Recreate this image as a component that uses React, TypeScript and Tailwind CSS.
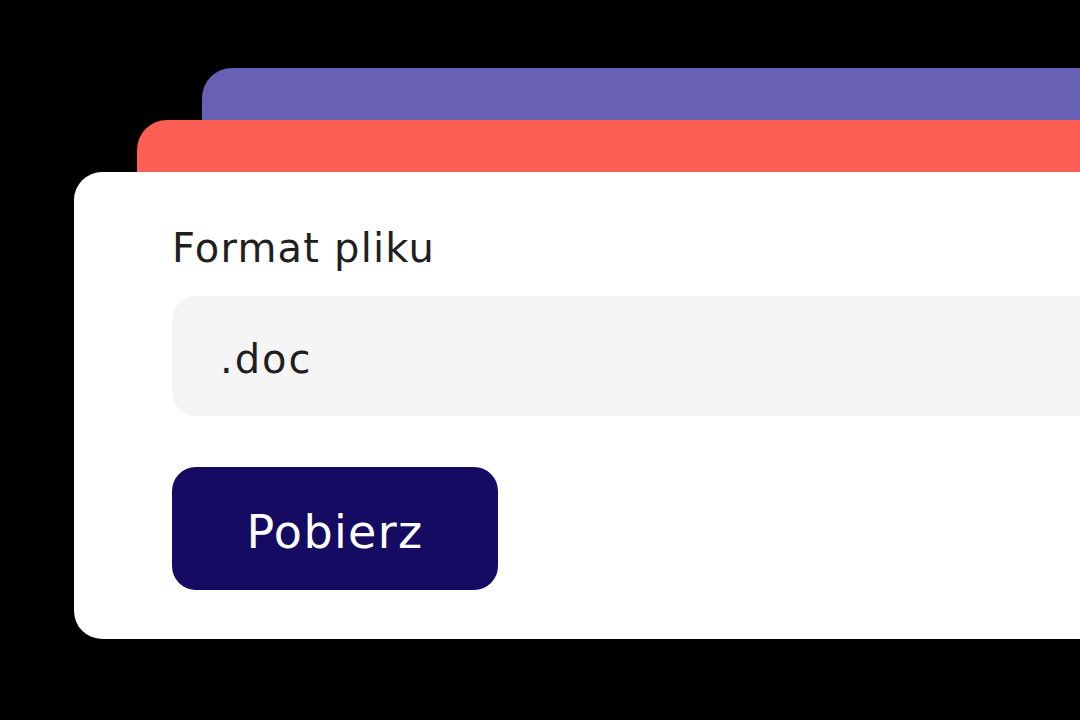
export default function App() {
  return (
    <div
      className="flex h-[720px] w-[1080px] flex-col overflow-hidden bg-black pt-[68px]"
      style={{ fontFamily: '"DejaVu Sans", "Open Sans", sans-serif' }}
    >
      <div className="ml-[202px] h-[52px] shrink-0 rounded-tl-[30px] bg-[#6860b3]" />
      <div className="ml-[137px] h-[52px] shrink-0 rounded-tl-[30px] bg-[#ff5e55]" />
      <div className="ml-[74px] flex h-[467px] shrink-0 flex-col rounded-l-[28px] bg-white pl-[98px] pt-[52px]">
        <label className="text-[40px] leading-[48px] tracking-[0.03em] text-[#1f1f1f]">Format pliku</label>
        <div className="mt-[24px] flex h-[120px] items-center rounded-l-[24px] bg-[#f5f5f5] pl-[48px] pt-[6px]">
          <span className="text-[40px] leading-[48px] tracking-[0.05em] text-[#1f1f1f]">.doc</span>
        </div>
        <button className="mt-[51px] flex h-[123px] w-[326px] items-center justify-center rounded-[24px] bg-[#150b63] pt-[6px] text-[46px] leading-[52px] tracking-[0.03em] text-white">
          Pobierz
        </button>
      </div>
    </div>
  );
}
